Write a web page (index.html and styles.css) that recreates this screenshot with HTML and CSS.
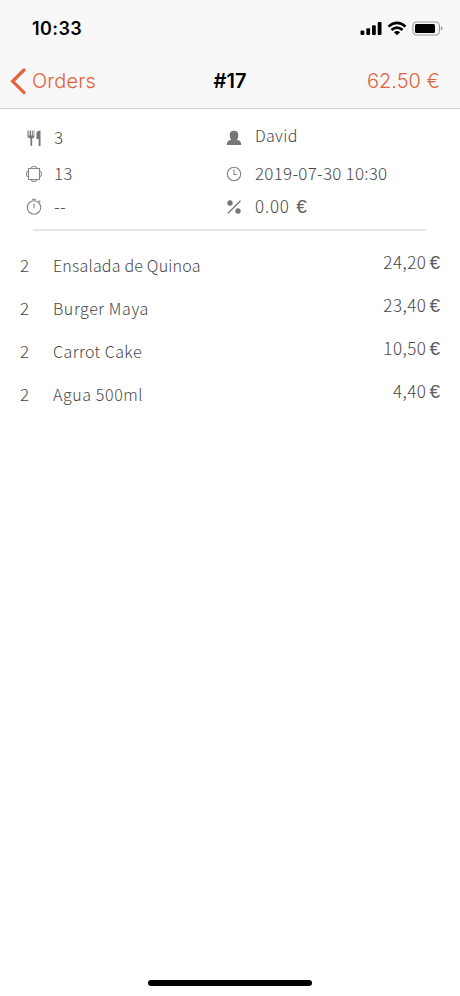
FILE: index.html
```html
<!DOCTYPE html>
<html lang="en">
<head>
<meta charset="utf-8">
<title>Order #17</title>
<link rel="stylesheet" href="styles.css">
</head>
<body>
<main class="screen">
  <header class="top">
    <div class="status">
      <span class="time">10:33</span>
      <svg class="status-icons" width="84" height="16" viewBox="0 0 84 16">
        <rect x="0.5" y="9.5" width="3.8" height="4.5" rx="1"/>
        <rect x="6.3" y="7.2" width="3.8" height="6.8" rx="1"/>
        <rect x="12" y="4.2" width="3.8" height="9.8" rx="1"/>
        <rect x="17.7" y="1" width="3.8" height="13" rx="1"/>
        <g fill="none" stroke="#000" stroke-width="2.5">
          <path d="M28.5 5.6Q37 -1.8 45.500 5.600"/>
          <path d="M31.400 9Q37 4.200 42.600 9"/>
        </g>
        <path d="M37 14.300L33.900 11.200Q37 8.700 40.100 11.200Z"/>
        <rect x="52.900" y="1" width="26.500" height="13" rx="3.700" fill="none" stroke="#999" stroke-width="1.100"/>
        <rect x="55" y="3" width="20" height="9" rx="1.500"/>
        <path d="M80.900 5.200Q82.600 6 82.600 7.500T80.900 9.800Z" fill="#999"/>
      </svg>
    </div>
    <nav class="nav">
      <a class="back"><svg width="16" height="28" viewBox="0 0 16 28"><path d="M14 3L2.600 14.300L14 25.600" fill="none" stroke="#e4623e" stroke-width="3.200" stroke-linecap="round" stroke-linejoin="miter"/></svg><span>Orders</span></a>
      <h1 class="title">#17</h1>
      <span class="total">62.50 €</span>
    </nav>
  </header>
  <section class="info">
    <div class="cell"><svg class="icon" viewBox="0 0 18 18"><path d="M2.500 1.500h1.200v5h1v-5h1.500v5h1v-5h1.200v5h.6v-5h.4v6q0 1.700-2.200 2v7.300H5.400V9.500Q2.500 9.200 2.500 7.500z"/><path d="M11.400 10V4.200Q11.600 1.800 15.500 1.500v15.500h-1.900V10z"/></svg><span class="text">3</span></div>
    <div class="cell"><svg class="icon" viewBox="0 0 18 18"><path d="M1.800 16q0-4 3-4.700l1.400-.5Q4.700 9 4.700 6.200 4.700 1.800 9 1.800t4.300 4.400q0 2.800-1.500 4.600l1.400.5q3 .7 3 4.700z"/></svg><span class="text name">David</span></div>
    <div class="cell"><svg class="icon line" viewBox="0 0 18 18"><path d="M3.500 3.500h11v11h-11z M6 3.300Q6.500 1.500 9 1.500t3 1.800 M6 14.700q.5 1.800 3 1.800t3-1.800 M3.300 6Q1.500 6.500 1.500 9t1.800 3 M14.700 6q1.800.5 1.800 3t-1.800 3"/></svg><span class="text">13</span></div>
    <div class="cell"><svg class="icon line" viewBox="0 0 18 18"><circle cx="9" cy="9" r="6.700"/><path d="M9 4.500v5h3"/></svg><span class="text">2019-07-30 10:30</span></div>
    <div class="cell"><svg class="icon line" viewBox="0 0 18 18"><circle cx="9" cy="9.500" r="6.700"/><path d="M9 5.500v4.700M7.800 2.300V1.300h2.400v1M13.600 2.500l1.700 1.600"/></svg><span class="text">--</span></div>
    <div class="cell"><svg class="icon" viewBox="0 0 18 18"><circle cx="5" cy="5" r="2.700"/><circle cx="13" cy="13" r="2.700"/><path d="M2.700 15.500L15.500 2.700" stroke="#777" stroke-width="1.300"/></svg><span class="text discount">0.00 <i class="euro">€</i></span></div>
  </section>
  <ul class="items">
    <li><span class="qty">2</span><span class="dish">Ensalada de Quinoa</span><span class="price">24,20<i class="euro">€</i></span></li>
    <li><span class="qty">2</span><span class="dish wide">Burger Maya</span><span class="price">23,40<i class="euro">€</i></span></li>
    <li><span class="qty">2</span><span class="dish">Carrot Cake</span><span class="price">10,50<i class="euro">€</i></span></li>
    <li><span class="qty">2</span><span class="dish wide">Agua 500ml</span><span class="price">4,40<i class="euro">€</i></span></li>
  </ul>
  <div class="home"></div>
</main>
</body>
</html>
```
FILE: styles.css
```css
* { box-sizing: border-box; }
body { margin: 0; background: #fff; }
.screen {
  width: 460px;
  height: 996px;
  display: flex;
  flex-direction: column;
  color: #484848;
  font: 300 16px/20px "Noto Sans CJK JP", "Open Sans", sans-serif;
}
.top {
  height: 109px;
  background: #f8f8f8;
  border-bottom: 1px solid #d2d2d2;
  font-family: Inter, sans-serif;
}
.status {
  height: 54px;
  padding: 18px 16px 0 32px;
  display: flex;
  justify-content: space-between;
  color: #000;
}
.time { font-size: 18px; font-weight: 600; line-height: 21px; letter-spacing: .4px; }
.status-icons { margin-top: 3px; }
.nav {
  height: 54px;
  padding: 0 20px 0 10px;
  display: grid;
  grid-template-columns: 1fr auto 1fr;
  align-items: center;
  font-size: 20px;
  font-weight: 350;
  color: #e4623e;
}
.back { display: flex; align-items: center; gap: 6px; letter-spacing: .15px; }
.title { margin: 0 0 0 10px; font-size: 20px; font-weight: 600; color: #000; }
.total { text-align: right; }
.info {
  height: 122px;
  margin: 0 34px 12px 33px;
  border-bottom: 2px solid #e6e6e6;
  padding-top: 11px;
  display: grid;
  grid-template-columns: 201px 1fr;
  grid-template-rows: 36px 35px 31px;
}
.cell { display: flex; align-items: center; gap: 11px; margin-left: -8px; }
.cell:nth-child(even) { margin-left: -9px; gap: 12px; }
.text { font-size: 17px; letter-spacing: .25px; padding-bottom: 2px; }
.name { font-size: 16px; letter-spacing: .3px; padding-bottom: 6px; }
.discount { letter-spacing: .8px; }
.icon { width: 18px; height: 18px; flex: none; fill: #777; }
.line { fill: none; stroke: #858585; stroke-width: 1.1; }
.euro { font-family: "Liberation Sans", sans-serif; font-size: 19px; line-height: 1; letter-spacing: 0; font-style: normal; font-weight: 400; color: #606060; }
.text .euro { margin-left: 2px; }
.items { list-style: none; margin: 0; padding: 0 20px; flex: 1; }
.items li { height: 43px; display: flex; align-items: center; }
.qty { width: 33px; font-size: 17px; }
.dish { flex: 1; letter-spacing: .2px; }
.wide { letter-spacing: .6px; }
.items li:nth-child(3) .dish { letter-spacing: .45px; }
.price { position: relative; top: -3px; font-size: 17px; letter-spacing: .5px; }
.price .euro { margin-left: 3px; }
.home { width: 164px; height: 6px; border-radius: 3px; background: #000; margin: 0 auto 10px; }
```
